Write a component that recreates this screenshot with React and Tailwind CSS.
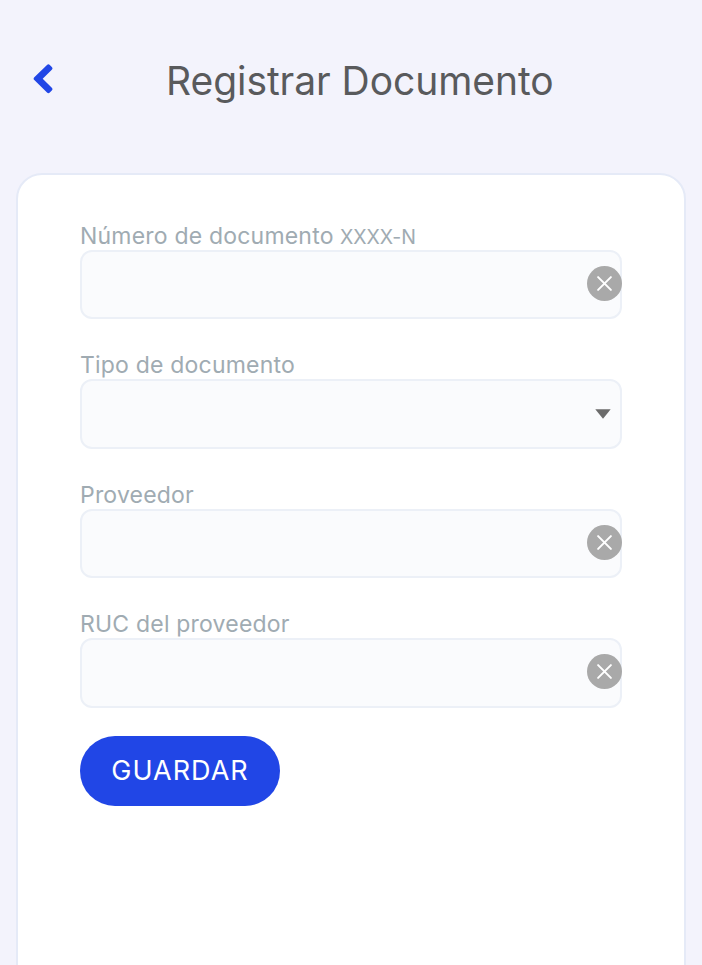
import React from "react";

function ClearButton() {
  return (
    <button type="button" aria-label="Borrar" className="-mr-[2px] mb-[2px] block size-[35px] shrink-0">
      <svg viewBox="0 0 35 35" className="block size-full">
        <circle cx="17.5" cy="17.5" r="17.5" fill="#a9a9a9" />
        <path d="M11.1 11.1 23.9 23.9M23.9 11.1 11.1 23.9" stroke="#fff" strokeWidth="2" strokeLinecap="round" />
      </svg>
    </button>
  );
}

function Caret() {
  return (
    <svg viewBox="0 0 16 10" className="mr-[9.5px] mt-px block h-[10px] w-4">
      <path d="M0.3 0.2H15.7L8 9.8Z" fill="#6b6b6b" />
    </svg>
  );
}

function Field({ label, hint, children }) {
  return (
    <div className="mb-[29.67px]">
      <div className="flex h-[30px] items-center whitespace-pre pt-[2px] text-[23px] leading-[30px] tracking-[0.2px] text-[#a0abb2]">
        <span>{label}</span>
        {hint && <span className="ml-[0.8px] pt-[2px] text-[19.5px] tracking-[-0.05px]"> {hint}</span>}
      </div>
      <div className="flex h-[69.8px] items-center justify-end rounded-[12px] border-2 border-[#ecf0f7] bg-[#fafbfd]">
        {children}
      </div>
    </div>
  );
}

export default function App() {
  return (
    <div className="flex h-[965px] w-[702px] flex-col overflow-hidden bg-[#f3f3fc] font-['Inter',sans-serif]">
      <header className="flex h-[173px] shrink-0 items-start pl-[33px] pt-[57px]">
        <svg viewBox="0 0 20 30" className="mt-[7px] block h-[30px] w-5">
          <path d="M14 .9Q15.4-.5 16.8.9L18.8 2.9Q20.2 4.3 18.8 5.7L9.7 14.7 18.8 23.7Q20.2 25.1 18.8 26.5L16.8 28.5Q15.4 29.9 14 28.5L1.3 16.1Q-.1 14.7 1.3 13.3Z" fill="#2146e6" />
        </svg>
        <h1 className="ml-[113px] whitespace-nowrap text-[39px] leading-[48px] tracking-[-0.06px] text-[#595a5c]">Registrar Documento</h1>
      </header>
      <main className="mx-4 h-[840px] shrink-0 rounded-t-[26px] border-2 border-[#e5eaf7] bg-white px-[62px] pt-[44.6px]">
        <Field label="Número de documento" hint="XXXX-N"><ClearButton /></Field>
        <Field label="Tipo de documento"><Caret /></Field>
        <Field label="Proveedor"><ClearButton /></Field>
        <Field label="RUC del proveedor"><ClearButton /></Field>
        <button type="button" className="-mt-[1.6px] block h-[70px] w-[200px] rounded-full bg-[#2146e6] pt-px text-[27px] tracking-[1px] text-white">GUARDAR</button>
      </main>
    </div>
  );
}
